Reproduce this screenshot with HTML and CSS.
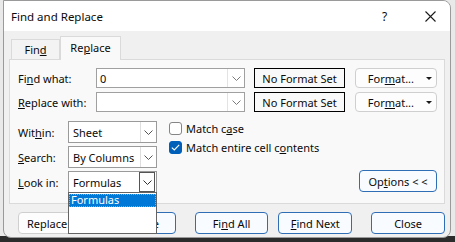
FILE: index.html
```html
<!DOCTYPE html>
<html lang="en">
<head>
    <meta charset="UTF-8">
    <meta name="viewport" content="width=device-width, initial-scale=1.0">
    <title>Find and Replace</title>
    <link rel="stylesheet" href="styles.css">
</head>
<body>
    <div class="dialog">
        <div class="titlebar">
            <span class="title">Find and Replace</span>
            <span class="help">?</span>
            <span class="close-x">
                <svg width="11" height="11" viewBox="0 0 11 11"><path d="M0.5 0.5 L10.5 10.5 M10.5 0.5 L0.5 10.5" stroke="#1a1a1a" stroke-width="1.1" fill="none"/></svg>
            </span>
        </div>
        <div class="content">
            <div class="tabs">
                <div class="tab">Fin<u>d</u></div>
                <div class="tab active">Re<u>p</u>lace</div>
            </div>
            <div class="panel">
                <div class="row">
                    <label class="label">Fi<u>n</u>d what:</label>
                    <div class="combo">
                        <span class="combo-text">0</span>
                        <span class="combo-arrow"><svg width="9" height="5" viewBox="0 0 9 5"><path d="M0.5 0.5 L4.5 4.5 L8.5 0.5" stroke="#7a7a7a" fill="none"/></svg></span>
                    </div>
                    <div class="nofmt">No Format Set</div>
                    <button class="btn fmt-btn">For<u>m</u>at... <span class="tri"></span></button>
                </div>
                <div class="row">
                    <label class="label"><u>R</u>eplace with:</label>
                    <div class="combo">
                        <span class="combo-text"></span>
                        <span class="combo-arrow"><svg width="9" height="5" viewBox="0 0 9 5"><path d="M0.5 0.5 L4.5 4.5 L8.5 0.5" stroke="#7a7a7a" fill="none"/></svg></span>
                    </div>
                    <div class="nofmt">No Format Set</div>
                    <button class="btn fmt-btn">For<u>m</u>at... <span class="tri"></span></button>
                </div>
                <div class="lower">
                    <div class="selects">
                        <div class="srow">
                            <label class="slabel">Wit<u>h</u>in:</label>
                            <div class="select">
                                <span class="select-text">Sheet</span>
                                <span class="select-arrow"><svg width="9" height="5" viewBox="0 0 9 5"><path d="M0.5 0.5 L4.5 4.5 L8.5 0.5" stroke="#555" fill="none"/></svg></span>
                            </div>
                        </div>
                        <div class="srow">
                            <label class="slabel"><u>S</u>earch:</label>
                            <div class="select">
                                <span class="select-text">By Columns</span>
                                <span class="select-arrow"><svg width="9" height="5" viewBox="0 0 9 5"><path d="M0.5 0.5 L4.5 4.5 L8.5 0.5" stroke="#555" fill="none"/></svg></span>
                            </div>
                        </div>
                        <div class="srow">
                            <label class="slabel"><u>L</u>ook in:</label>
                            <div class="select open">
                                <span class="select-text">Formulas</span>
                                <span class="select-arrow"><svg width="9" height="5" viewBox="0 0 9 5"><path d="M0.5 0.5 L4.5 4.5 L8.5 0.5" stroke="#333" fill="none"/></svg></span>
                                <div class="droplist">
                                    <div class="dropitem selected">Formulas</div>
                                </div>
                            </div>
                        </div>
                    </div>
                    <div class="checks">
                        <div class="check">
                            <span class="box"></span>
                            <span>Match c<u>a</u>se</span>
                        </div>
                        <div class="check">
                            <span class="box checked"><svg width="9" height="7" viewBox="0 0 9 7"><path d="M0.8 3.6 L3.3 6 L8.2 0.8" stroke="#fff" stroke-width="1.1" fill="none"/></svg></span>
                            <span>Match entire cell c<u>o</u>ntents</span>
                        </div>
                    </div>
                    <div class="opt-wrap">
                        <button class="btn blue opt-btn">Op<u>t</u>ions &lt; &lt;</button>
                    </div>
                </div>
            </div>
            <div class="buttons">
                <button class="btn">Replace <u>A</u>ll</button>
                <button class="btn blue">Replace</button>
                <button class="btn blue gap">Fi<u>n</u>d All</button>
                <button class="btn blue"><u>F</u>ind Next</button>
                <button class="btn blue gap">Close</button>
            </div>
        </div>
    </div>
</body>
</html>
```

FILE: styles.css
```css
body {
    margin: 0;
    width: 455px;
    height: 242px;
    background: #2b2b2b;
    font-family: "Noto Sans", sans-serif;
    font-size: 11px;
    color: #0a0a0a;
    overflow: hidden;
    position: relative;
}
body::before {
    content: "";
    position: absolute;
    top: 0;
    left: 0;
    right: 0;
    height: 236px;
    background: #e9e9e9;
}
.dialog {
    position: relative;
    margin-left: 3px;
    width: 446px;
    height: 236px;
    border: 1px solid #9a9a9a;
    border-radius: 0 8px 8px 8px;
    background: #f0f0f0;
    overflow: hidden;
}
.titlebar {
    height: 30px;
    background: #ffffff;
    display: flex;
    align-items: center;
    padding-left: 7px;
}
.title {
    flex: 1;
    font-size: 11.5px;
}
.help {
    width: 12px;
    margin-right: 31px;
    font-size: 12px;
}
.close-x {
    display: flex;
    margin-right: 14px;
}
.content {
    padding: 0 5px 0 5px;
}
.tabs {
    display: flex;
    align-items: flex-end;
    height: 28px;
    padding-left: 2px;
}
.tab {
    width: 49px;
    height: 20px;
    display: flex;
    align-items: center;
    justify-content: center;
    background: #f3f3f3;
    border: 1px solid #dadada;
    border-bottom: none;
    box-sizing: border-box;
}
.tab.active {
    width: 61px;
    height: 24px;
    margin-bottom: -1px;
    background: #f9f9f9;
    position: relative;
    padding-bottom: 3px;
}
.panel {
    background: #f9f9f9;
    border: 1px solid #dadada;
    padding: 8px 7px 0 8px;
    box-sizing: border-box;
    height: 145px;
}
.row {
    display: flex;
    align-items: center;
    height: 20px;
    margin-bottom: 4px;
}
.label {
    width: 78px;
}
.combo {
    width: 149px;
    height: 20px;
    box-sizing: border-box;
    border: 1px solid #a0a0a0;
    background: #fff;
    display: flex;
    align-items: center;
}
.combo-text {
    flex: 1;
    padding-left: 3px;
}
.combo-arrow {
    width: 16px;
    height: 18px;
    display: flex;
    align-items: center;
    justify-content: center;
    border-left: 1px solid #e3e3e3;
}
.nofmt {
    margin-left: 9px;
    width: 91px;
    height: 20px;
    box-sizing: border-box;
    border: 1px solid #000;
    display: flex;
    align-items: center;
    justify-content: center;
}
.btn {
    font-family: inherit;
    font-size: 11px;
    color: #0a0a0a;
    background: #fdfdfd;
    border: 1px solid #cfcfcf;
    border-radius: 4px;
    width: 74px;
    height: 22px;
    padding: 0;
    box-sizing: border-box;
}
.btn.blue {
    border-color: #2f6db5;
    background: #f8fbff;
}
.fmt-btn {
    margin-left: 10px;
    width: 82px;
    height: 20px;
    display: flex;
    align-items: center;
    justify-content: flex-end;
    padding-right: 4px;
}
.tri {
    width: 0;
    height: 0;
    border-left: 3px solid transparent;
    border-right: 3px solid transparent;
    border-top: 3px solid #1a1a1a;
    margin-left: 12px;
}
.lower {
    display: flex;
    margin-top: 9px;
}
.selects {
    display: flex;
    flex-direction: column;
    gap: 3px;
}
.srow {
    display: flex;
    align-items: center;
}
.slabel {
    width: 50px;
}
.select {
    position: relative;
    width: 89px;
    height: 22px;
    box-sizing: border-box;
    border: 1px solid #9a9a9a;
    background: #fff;
    display: flex;
    align-items: center;
}
.select-text {
    flex: 1;
    padding-left: 4px;
}
.select-arrow {
    width: 15px;
    height: 20px;
    display: flex;
    align-items: center;
    justify-content: center;
    border-left: 1px solid #dedede;
}
.select.open .select-arrow {
    border: 1px solid #555;
    height: 18px;
    width: 14px;
    margin-right: 1px;
    background: #fff;
}
.droplist {
    position: absolute;
    top: 20px;
    left: -1px;
    width: 89px;
    height: 42px;
    box-sizing: border-box;
    border: 1px solid #646464;
    background: #fff;
    padding-top: 1px;
    z-index: 5;
}
.dropitem {
    height: 13px;
    line-height: 12px;
    padding-left: 2px;
}
.dropitem.selected {
    background: #0078d7;
    color: #fff;
    outline: 1px dotted #e89a3a;
    outline-offset: -1px;
}
.checks {
    margin-left: 12px;
    display: flex;
    flex-direction: column;
    gap: 6px;
    padding-top: 1px;
}
.check {
    display: flex;
    align-items: center;
    gap: 4px;
    height: 13px;
}
.box {
    width: 13px;
    height: 13px;
    box-sizing: border-box;
    border: 1px solid #858585;
    border-radius: 3px;
    background: #fff;
    display: flex;
    align-items: center;
    justify-content: center;
}
.box.checked {
    background: #005fb8;
    border-color: #005fb8;
}
.opt-wrap {
    flex: 1;
    display: flex;
    align-items: flex-end;
    justify-content: flex-end;
    padding-bottom: 1px;
}
.opt-btn {
    width: 78px;
    height: 22px;
}
.buttons {
    display: flex;
    padding: 8px 0 0 9px;
}
.buttons .btn + .btn {
    margin-left: 10px;
}
.buttons .btn.gap {
    margin-left: 19px;
}
```
